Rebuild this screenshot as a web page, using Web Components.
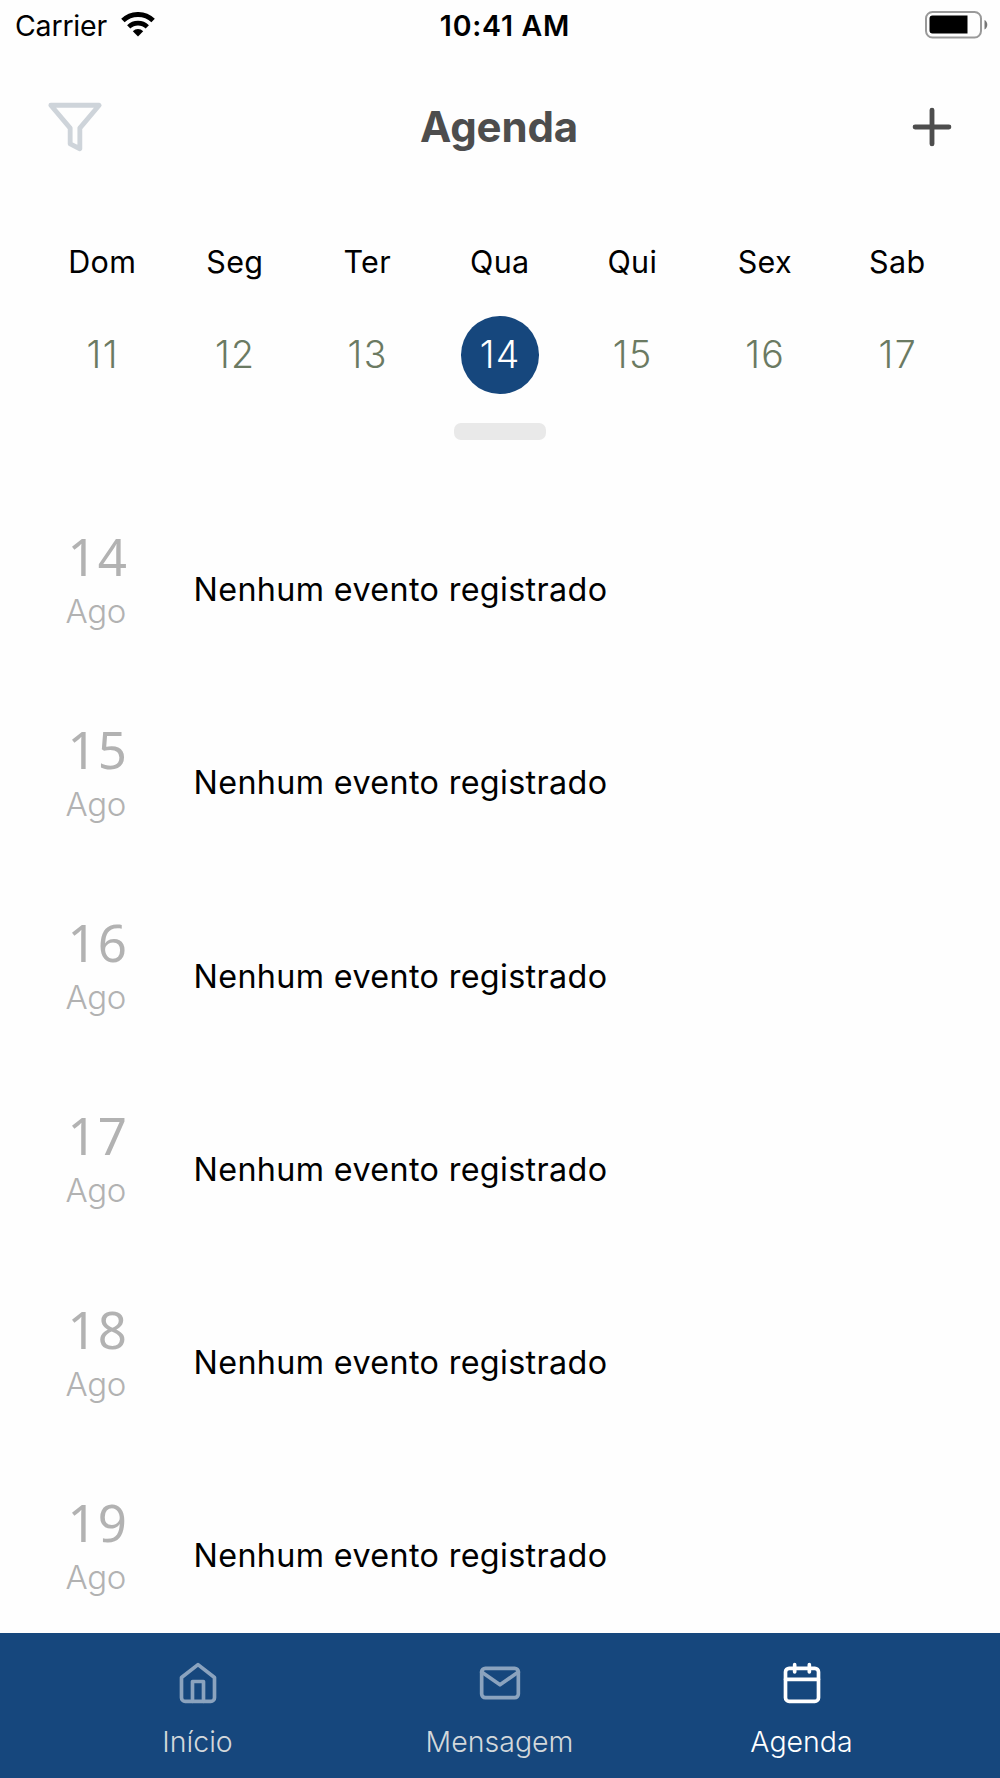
<!DOCTYPE html>
<html lang="pt-br">
<head>
<meta charset="UTF-8">
<title>Agenda</title>
<style>
  body {
    margin: 0;
    background: #fefefe;
    font-family: "Inter", "Liberation Sans", sans-serif;
  }
</style>
</head>
<body>
<agenda-app></agenda-app>

<script>
class StatusBar extends HTMLElement {
  constructor() {
    super();
    this.attachShadow({ mode: 'open' });
    this.shadowRoot.innerHTML = `<style>
  :host {
    display: grid;
    grid-template-columns: 1fr auto 1fr;
    align-items: center;
    box-sizing: border-box;
    height: 51px;
    padding: 0 12px 0 15px;
    color: #000;
    font-size: 28.5px;
    line-height: 51px;
  }
  .carrier {
    display: flex;
    align-items: center;
    gap: 14px;
    letter-spacing: -0.2px;
  }
  .wifi { margin-top: -2px; }
  .clock {
    font-weight: 600;
    letter-spacing: 0.75px;
    padding-left: 7px;
  }
  .battery { justify-self: end; margin-top: -2px; }
  svg { display: block; }
</style>
      <div class="carrier">
        <span>Carrier</span>
        <svg class="wifi" width="34" height="25" viewBox="0 0 34 25">
          <path d="M1.9 8.6a21.6 21.6 0 0 1 30.2 0" fill="none" stroke="#000" stroke-width="4.9"/>
          <path d="M7.7 14.9a13.3 13.3 0 0 1 18.6 0" fill="none" stroke="#000" stroke-width="4.6"/>
          <path d="M17 24.6l-5.2-5.4a7.5 7.5 0 0 1 10.4 0z" fill="#000"/>
        </svg>
      </div>
      <span class="clock">10:41 AM</span>
      <svg class="battery" width="63" height="28" viewBox="0 0 63 28">
        <rect x="1" y="1" width="55" height="25.5" rx="6.5" fill="none" stroke="#999" stroke-width="2"/>
        <path d="M7.500 4.500H42.500V22.500H7.500a3 3 0 0 1-3-3V7.500a3 3 0 0 1 3-3z" fill="#000"/>
        <path d="M59.500 9c3.700 1.500 3.700 8 0 9.500z" fill="#777"/>
      </svg>`;
  }
}
customElements.define('status-bar', StatusBar);

class AgendaHeader extends HTMLElement {
  constructor() {
    super();
    this.attachShadow({ mode: 'open' });
    this.shadowRoot.innerHTML = `<style>
  :host {
    display: flex;
    align-items: center;
    justify-content: space-between;
    box-sizing: border-box;
    height: 152px;
    padding: 0 39px 0 46px;
  }
  h1 {
    margin: 0;
    padding-right: 9px;
    color: #4d4d4d;
    font-size: 42px;
    font-weight: 700;
    line-height: 50px;
    letter-spacing: -0.15px;
  }
  svg {
    display: block;
    fill: none;
    stroke-width: 2;
    stroke-linecap: round;
    stroke-linejoin: round;
  }
</style>
      <svg width="58" height="58" viewBox="0 0 24 24" stroke="#ced4da">
        <polygon points="22 3 2 3 10 12.460 10 19 14 21 14 12.460 22 3"/>
      </svg>
      <h1><slot></slot></h1>
      <svg width="58" height="58" viewBox="0 0 24 24" stroke="#4d4d4d">
        <path d="M12 5v14M5 12h14"/>
      </svg>`;
  }
}
customElements.define('agenda-header', AgendaHeader);

class WeekDay extends HTMLElement {
  constructor() {
    super();
    this.attachShadow({ mode: 'open' });
    this.shadowRoot.innerHTML = `<style>
  :host {
    display: flex;
    flex-direction: column;
    align-items: center;
  }
  .name {
    color: #000;
    font-size: 30.5px;
    line-height: 40px;
    letter-spacing: 0.3px;
  }
  .number {
    display: flex;
    align-items: center;
    justify-content: center;
    width: 77.5px;
    height: 77.5px;
    margin-top: 34px;
    border-radius: 50%;
    color: #6b7a62;
    font-size: 37.5px;
    font-weight: 300;
    line-height: 44px;
    letter-spacing: 1.4px;
    text-indent: 1px;
  }
  :host([selected]) .number {
    background: #16477d;
    color: #fff;
  }
</style>
      <span class="name">${this.getAttribute('name')}</span>
      <span class="number"><slot></slot></span>`;
  }
}

class WeekStrip extends HTMLElement {
  constructor() {
    super();
    this.attachShadow({ mode: 'open' });
    this.shadowRoot.innerHTML = `<style>
  :host {
    display: block;
    padding: 39px 36.5px 0 36px;
  }
  .days {
    display: grid;
    grid-template-columns: repeat(7, 1fr);
  }
  .handle {
    width: 92px;
    height: 17px;
    margin: 29px auto 0;
    border-radius: 7px;
    background: #e9e9e9;
  }
</style>
      <div class="days"><slot></slot></div>
      <div class="handle"></div>`;
  }
}
customElements.define('week-strip', WeekStrip);

class AgendaItem extends HTMLElement {
  constructor() {
    super();
    this.attachShadow({ mode: 'open' });
    this.shadowRoot.innerHTML = `<style>
  :host {
    display: flex;
    align-items: center;
    height: 193.25px;
    flex: none;
  }
  .date {
    display: flex;
    flex-direction: column;
    align-items: center;
    width: 193.5px;
    color: #b2b2b2;
  }
  .day {
    font-family: "Noto Sans", "Open Sans", sans-serif;
    font-size: 51px;
    font-weight: 400;
    line-height: 54px;
    letter-spacing: 1px;
    padding-left: 2px;
  }
  .month {
    margin-top: 4px;
    font-size: 33px;
    font-weight: 300;
    line-height: 48px;
    letter-spacing: -0.4px;
    padding-right: 2px;
  }
  .text {
    color: #000;
    font-size: 32.3px;
    line-height: 40px;
    letter-spacing: 0.36px;
    margin-top: 17px;
  }
</style>
      <div class="date">
        <span class="day">${this.getAttribute('day')}</span>
        <span class="month">${this.getAttribute('month')}</span>
      </div>
      <span class="text"><slot></slot></span>`;
  }
}

class TabItem extends HTMLElement {
  constructor() {
    super();
    this.attachShadow({ mode: 'open' });
    const icons = {
      home: '<path d="M3 9l9-7 9 7v11a2 2 0 0 1-2 2H5a2 2 0 0 1-2-2z"/><polyline points="9 22 9 11.200 15 11.200 15 22"/>',
      mail: '<rect x="2" y="4" width="20" height="16" rx="2"/><polyline points="22 6 12 13 2 6"/>',
      calendar: '<rect x="3" y="4" width="18" height="18" rx="2"/><path d="M16 2v4M8 2v4M3 10h18"/>'
    };
    this.shadowRoot.innerHTML = `<style>
  :host {
    display: flex;
    flex-direction: column;
    align-items: center;
    color: #d3d8db;
    font-size: 28.5px;
    font-weight: 300;
    line-height: 36px;
    letter-spacing: 0;
  }
  svg {
    display: block;
    margin: 28px 0 19px;
    fill: none;
    stroke: #8ba3be;
    stroke-width: 2;
    stroke-linecap: round;
    stroke-linejoin: round;
  }
  :host([selected]) { color: #fff; }
  :host([selected]) svg { stroke: #fff; }
</style>
      <svg width="44" height="44" viewBox="0 0 24 24">${icons[this.getAttribute('icon')]}</svg>
      <span><slot></slot></span>`;
  }
}

class TabBar extends HTMLElement {
  constructor() {
    super();
    this.attachShadow({ mode: 'open' });
    this.shadowRoot.innerHTML = `<style>
  :host {
    display: grid;
    grid-template-columns: repeat(3, 1fr);
    flex: none;
    box-sizing: border-box;
    height: 145px;
    padding: 0 47.5px 0 46.5px;
    background: #16477d;
  }
</style>
      <slot></slot>`;
  }
}
customElements.define('tab-bar', TabBar);

class AgendaApp extends HTMLElement {
  constructor() {
    super();
    this.attachShadow({ mode: 'open' });
    const names = ['Dom', 'Seg', 'Ter', 'Qua', 'Qui', 'Sex', 'Sab'];
    const week = names.map((name, i) =>
      `<week-day name="${name}" ${i === 3 ? 'selected' : ''}>${11 + i}</week-day>`).join('');
    const items = [14, 15, 16, 17, 18, 19].map(day =>
      `<agenda-item day="${day}" month="Ago">Nenhum evento registrado</agenda-item>`).join('');

    this.shadowRoot.innerHTML = `<style>
  :host {
    display: flex;
    flex-direction: column;
    width: 1000px;
    height: 1778px;
    overflow: hidden;
  }
  .list {
    flex: 1;
    min-height: 0;
    overflow: hidden;
    padding-top: 45.5px;
  }
</style>
      <status-bar></status-bar>
      <agenda-header>Agenda</agenda-header>
      <week-strip>${week}</week-strip>
      <div class="list">${items}</div>
      <tab-bar>
        <tab-item icon="home">Início</tab-item>
        <tab-item icon="mail">Mensagem</tab-item>
        <tab-item icon="calendar" selected>Agenda</tab-item>
      </tab-bar>`;
  }
}

customElements.define('week-day', WeekDay);
customElements.define('agenda-item', AgendaItem);
customElements.define('tab-item', TabItem);
customElements.define('agenda-app', AgendaApp);
</script>
</body>
</html>
